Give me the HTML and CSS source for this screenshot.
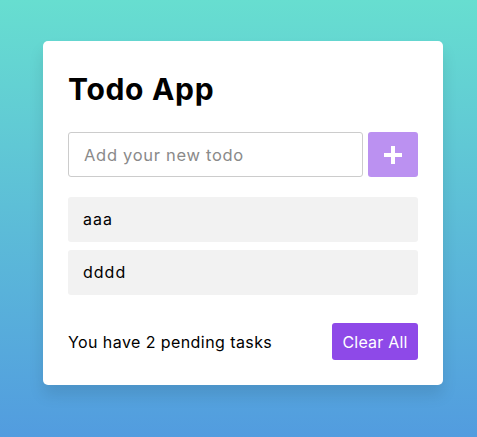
FILE: index.html
```html
<!DOCTYPE html>
<html>
<head>
<meta charset="utf-8">
<link rel="stylesheet" href="styles.css">
</head>
<body>
<div class="wrapper">
  <h1 class="title">Todo App</h1>
  <div class="input-field">
    <input class="todo-input" type="text" placeholder="Add your new todo">
    <button class="add-btn" aria-label="Add">
      <svg width="18" height="18" viewBox="0 0 18 18"><path d="M7 0h4v7h7v4h-7v7h-4v-7h-7v-4h7z" fill="#fff"/></svg>
    </button>
  </div>
  <ul class="todo-list">
    <li class="todo-item">aaa</li>
    <li class="todo-item">dddd</li>
  </ul>
  <div class="footer">
    <span class="pending">You have 2 pending tasks</span>
    <button class="clear-btn">Clear All</button>
  </div>
</div>
</body>
</html>
```
FILE: styles.css
```css
* { box-sizing: border-box; margin: 0; padding: 0; }
html, body { height: 100%; }
body {
  font-family: "Inter", "Open Sans", sans-serif;
  background: linear-gradient(to bottom, #67ded0 0%, #529cdf 100%);
  padding-top: 41px;
  padding-left: 43px;
}
.wrapper {
  width: 400px;
  background: #fff;
  border-radius: 5px;
  padding: 25px;
  box-shadow: 0 10px 15px rgba(0,0,0,0.1);
}
.title {
  font-size: 30px;
  font-weight: 700;
  line-height: 46px;
  letter-spacing: 0.7px;
  color: #000;
}
.input-field {
  display: flex;
  justify-content: space-between;
  margin-top: 20px;
  height: 45px;
}
.todo-input {
  width: 295px;
  height: 45px;
  border: 1px solid #ccc;
  border-radius: 3px;
  padding-left: 15px;
  font-family: inherit;
  font-size: 16.5px;
  letter-spacing: 0.7px;
  outline: none;
}
.todo-input::placeholder { color: #8a8a8a; }
.add-btn {
  width: 50px;
  height: 45px;
  border: none;
  border-radius: 3px;
  background: #8E49E8;
  opacity: 0.6;
  display: flex;
  align-items: center;
  justify-content: center;
}
.todo-list {
  list-style: none;
  margin-top: 20px;
  display: flex;
  flex-direction: column;
  gap: 8px;
}
.todo-item {
  height: 45px;
  line-height: 45px;
  background: #f2f2f2;
  border-radius: 3px;
  padding: 0 15px;
  font-size: 16px;
  letter-spacing: 1px;
  color: #000;
}
.footer {
  display: flex;
  align-items: center;
  justify-content: space-between;
  margin-top: 28px;
}
.pending { font-size: 16px; letter-spacing: 0.42px; color: #000; }
.clear-btn {
  height: 37px;
  width: 86px;
  border: none;
  border-radius: 3px;
  background: #8E49E8;
  color: #fff;
  font-family: inherit;
  font-size: 16px;
  letter-spacing: 0.2px;
}
```
